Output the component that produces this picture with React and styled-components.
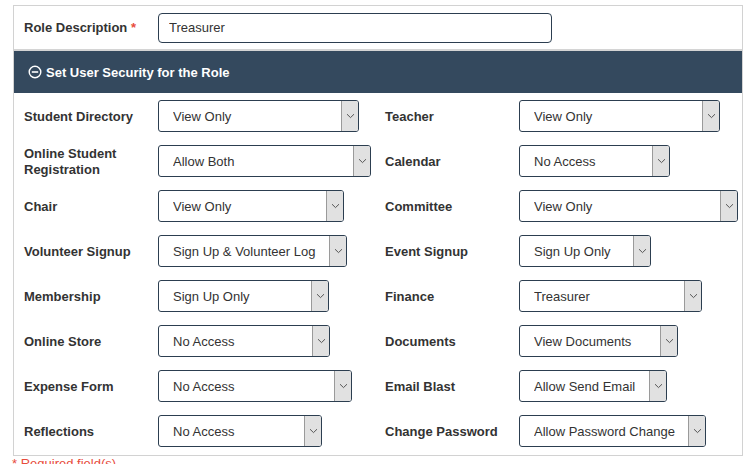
import React from 'react';
import styled, { createGlobalStyle } from 'styled-components';

const GlobalStyle = createGlobalStyle`
  body {
    margin: 0;
    background: #fff;
    font-family: 'Liberation Sans', Arial, sans-serif;
    color: #333;
  }
`;

const Page = styled.div`
  height: 464px;
  overflow: hidden;
  padding: 5px 6px 0 13px;
  box-sizing: border-box;
`;

const Panel = styled.div`
  border: 1px solid #d2d2d2;
  width: 730px;
  box-sizing: border-box;
`;

const RoleRow = styled.div`
  display: flex;
  align-items: center;
  height: 43px;
  padding-left: 10px;
  border-bottom: 2px solid #d4d4d4;
`;

const Label = styled.label`
  width: 134px;
  flex-shrink: 0;
  padding: ${p => (p.$flush ? 0 : 2)}px 12px 0 0;
  box-sizing: border-box;
  font-size: 13px;
  font-weight: bold;
  line-height: 16px;
  color: #333;
`;

const Star = styled.span`
  color: #e74c3c;
`;

const TextInput = styled.input`
  width: 394px;
  height: 30px;
  box-sizing: border-box;
  border: 1px solid #2c3e50;
  border-radius: 4px;
  padding: 0 10px;
  font-family: inherit;
  font-size: 13px;
  color: #333;
  outline: none;
`;

const Header = styled.div`
  display: flex;
  align-items: center;
  gap: 4px;
  height: 42px;
  padding-left: 14px;
  background: #34495e;
  color: #fff;
  font-size: 13px;
  font-weight: bold;
`;

const Grid = styled.div`
  display: grid;
  grid-template-columns: 361px 1fr;
  row-gap: 13px;
  padding: 7px 0 8px 10px;
`;

const Field = styled.div`
  display: flex;
  align-items: center;
  height: 32px;
`;

const SelectBox = styled.div`
  display: flex;
  width: ${p => p.$w}px;
  height: 32px;
  box-sizing: border-box;
  border: 1px solid #2c3e50;
  border-radius: 3px;
  overflow: hidden;
  background: #fff;
`;

const NativeSelect = styled.select`
  flex: 1;
  min-width: 0;
  appearance: none;
  border: none;
  background: transparent;
  padding: 0 0 0 14px;
  font-family: 'Liberation Sans', Arial, sans-serif;
  font-size: 13px;
  color: #333;
  outline: none;
`;

const ArrowBox = styled.span`
  width: 16px;
  flex-shrink: 0;
  display: flex;
  align-items: center;
  justify-content: center;
  background: #e1e1e1;
  border-left: 1px solid #9a9a9a;
  pointer-events: none;
`;

const Required = styled.div`
  color: #e74c3c;
  font-size: 13px;
  line-height: 16px;
  margin-left: -1px;
`;

const Chevron = () => (
  <svg width="9" height="6" viewBox="0 0 9 6">
    <path d="M1 1.2 L4.5 4.6 L8 1.2" fill="none" stroke="#555" strokeWidth="1" />
  </svg>
);

const MinusCircle = () => (
  <svg width="14" height="14" viewBox="0 0 14 14">
    <circle cx="7" cy="7" r="5.8" fill="none" stroke="#fff" strokeWidth="1.4" />
    <line x1="3.8" y1="7" x2="10.2" y2="7" stroke="#fff" strokeWidth="1.6" />
  </svg>
);

const Select = ({ value, width }) => (
  <SelectBox $w={width}>
    <NativeSelect defaultValue={value}>
      <option>{value}</option>
    </NativeSelect>
    <ArrowBox><Chevron /></ArrowBox>
  </SelectBox>
);

const fields = [
  ['Student Directory', 'View Only', 201],
  ['Teacher', 'View Only', 201],
  ['Online Student Registration', 'Allow Both', 213],
  ['Calendar', 'No Access', 151],
  ['Chair', 'View Only', 186],
  ['Committee', 'View Only', 219],
  ['Volunteer Signup', 'Sign Up & Volunteer Log', 189],
  ['Event Signup', 'Sign Up Only', 132],
  ['Membership', 'Sign Up Only', 171],
  ['Finance', 'Treasurer', 183],
  ['Online Store', 'No Access', 172],
  ['Documents', 'View Documents', 159],
  ['Expense Form', 'No Access', 194],
  ['Email Blast', 'Allow Send Email', 148],
  ['Reflections', 'No Access', 164],
  ['Change Password', 'Allow Password Change', 187],
];

export default function App() {
  return (
    <>
      <GlobalStyle />
      <Page>
        <Panel>
          <RoleRow>
            <Label $flush>Role Description <Star>*</Star></Label>
            <TextInput defaultValue="Treasurer" />
          </RoleRow>
          <Header>
            <MinusCircle />
            <span>Set User Security for the Role</span>
          </Header>
          <Grid>
            {fields.map(([label, value, width]) => (
              <Field key={label}>
                <Label>{label}</Label>
                <Select value={value} width={width} />
              </Field>
            ))}
          </Grid>
        </Panel>
        <Required>* Required field(s)</Required>
      </Page>
    </>
  );
}
